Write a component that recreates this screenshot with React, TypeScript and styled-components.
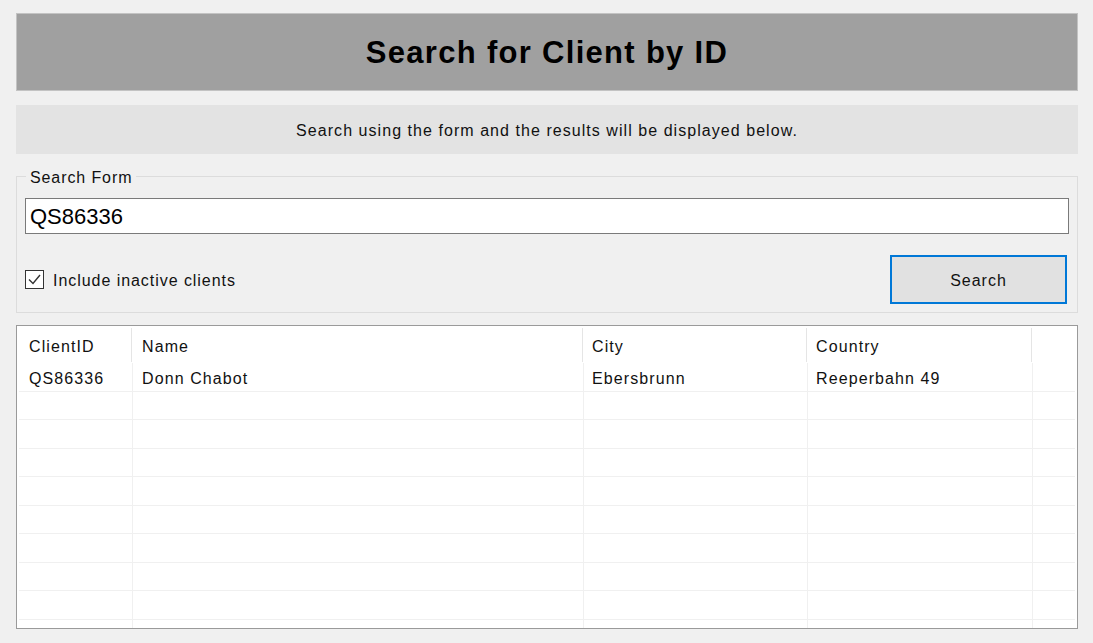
import React from "react";
import styled, { createGlobalStyle } from "styled-components";

const Global = createGlobalStyle`
  html, body { margin: 0; padding: 0; background: #f0f0f0; }
  body { font-family: "Liberation Sans", Arial, sans-serif; color: #000; }
  * { box-sizing: border-box; }
`;

const Page = styled.div`
  width: 1093px;
  height: 643px;
  padding: 13px 15px 0 16px;
  display: flex;
  flex-direction: column;
  overflow: hidden;
`;

const TitleBar = styled.div`
  height: 78px;
  padding-top: 2px;
  background: #a0a0a0;
  border: 1px solid #c3c3c3;
  display: flex;
  align-items: center;
  justify-content: center;
  font-size: 31px;
  letter-spacing: 1.3px;
  font-weight: bold;
  color: #000;
`;

const InfoBar = styled.div`
  margin-top: 14px;
  height: 49px;
  padding-top: 3px;
  background: #e3e3e3;
  display: flex;
  align-items: center;
  justify-content: center;
  font-size: 16px;
  letter-spacing: 1.05px;
  color: #111;
`;

const Group = styled.fieldset`
  margin: 11px 0 0;
  padding: 0 8px 8px;
  border: 1px solid #dcdcdc;
  min-width: 0;
`;

const Legend = styled.legend`
  font-size: 16px;
  letter-spacing: 0.9px;
  line-height: 18px;
  padding: 4px 4px 0;
  margin-left: 1px;
  color: #111;
`;

const TextBox = styled.div`
  margin-top: 11px;
  height: 36px;
  border: 1px solid #7a7a7a;
  background: #fff;
  display: flex;
  align-items: center;
  padding: 2px 0 0 4px;
  font-size: 22px;
  color: #000;
`;

const FormRow = styled.div`
  margin-top: 21px;
  display: flex;
  align-items: center;
  justify-content: space-between;
`;

const CheckLabel = styled.label`
  display: flex;
  align-items: center;
  gap: 9px;
  font-size: 16px;
  letter-spacing: 0.95px;
  color: #111;
  & > span { padding-top: 2px; }
`;

const Button = styled.button`
  width: 177px;
  height: 49px;
  margin-right: 2px;
  padding: 3px 0 0;
  background: #e1e1e1;
  border: 2px solid #0078d7;
  font-family: inherit;
  font-size: 16px;
  letter-spacing: 1px;
  color: #111;
`;

const Grid = styled.div`
  margin-top: 12px;
  height: 304px;
  border: 1px solid #9a9a9a;
  box-shadow: inset 0 0 0 1px #fff;
  background: #fff;
  overflow: hidden;
  padding: 0 1px;
`;

const Row = styled.div<{ $header?: boolean }>`
  display: grid;
  grid-template-columns: 114px 451px 224px 225px 1fr;
  height: ${(p) => (p.$header ? "37px" : "28.5px")};
  border-bottom: ${(p) => (p.$header ? "none" : "1px solid #f0f0f0")};
  margin: ${(p) => (p.$header ? "0" : "0 1px")};
`;

const Cell = styled.div<{ $header?: boolean; $pad: number }>`
  display: flex;
  align-items: center;
  padding: ${(p) => (p.$header ? 3 : 5)}px 0 0 ${(p) => p.$pad}px;
  font-size: 16px;
  letter-spacing: 1.1px;
  color: #111;
  white-space: nowrap;
  border-right: 1px solid ${(p) => (p.$header ? "#e5e5e5" : "#f0f0f0")};
  margin: ${(p) => (p.$header ? "2px 0 1px" : "0")};
  &:last-child { border-right: none; }
`;

const headers = ["ClientID", "Name", "City", "Country", ""];
const data = [["QS86336", "Donn Chabot", "Ebersbrunn", "Reeperbahn 49", ""]];
const pads = [10, 9, 8, 8, 0];

function Check() {
  return (
    <svg width="19" height="19" viewBox="0 0 19 19">
      <rect x="0.5" y="0.5" width="18" height="18" fill="#fff" stroke="#333" />
      <path d="M4 9.5 L8 13.5 L15 5" fill="none" stroke="#333" strokeWidth="1.4" />
    </svg>
  );
}

export default function App() {
  const rows = [...data];
  while (rows.length < 10) rows.push(["", "", "", "", ""]);
  return (
    <>
      <Global />
      <Page>
        <TitleBar>Search for Client by ID</TitleBar>
        <InfoBar>Search using the form and the results will be displayed below.</InfoBar>
        <Group>
          <Legend>Search Form</Legend>
          <TextBox>QS86336</TextBox>
          <FormRow>
            <CheckLabel>
              <Check />
              <span>Include inactive clients</span>
            </CheckLabel>
            <Button>Search</Button>
          </FormRow>
        </Group>
        <Grid>
          <Row $header>
            {headers.map((h, i) => (
              <Cell key={i} $header $pad={pads[i] + 1}>{h}</Cell>
            ))}
          </Row>
          {rows.map((r, ri) => (
            <Row key={ri}>
              {r.map((c, ci) => (
                <Cell key={ci} $pad={pads[ci]}>{c}</Cell>
              ))}
            </Row>
          ))}
        </Grid>
      </Page>
    </>
  );
}
